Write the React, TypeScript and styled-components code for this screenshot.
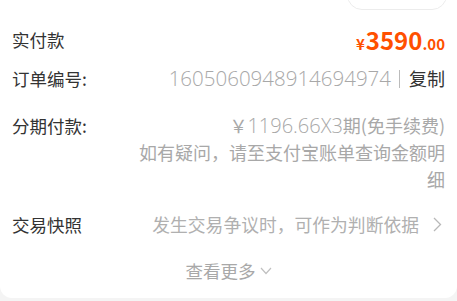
import React from "react";
import styled, { createGlobalStyle } from "styled-components";

const Global = createGlobalStyle`
  html, body { margin: 0; padding: 0; background: #f4f4f4; }
  body { font-family: "Noto Sans CJK SC", "Noto Sans", sans-serif; }
  * { box-sizing: border-box; }
`;

const Card = styled.div`
  width: 457px;
  height: 298px;
  background: #fff;
  border-radius: 0 0 12px 12px;
  padding: 0 12px 12px;
  display: flex;
  flex-direction: column;
  overflow: hidden;
`;

const TopBar = styled.div`
  height: 10px;
  display: flex;
  justify-content: flex-end;
`;

const Pill = styled.div`
  width: 100px;
  height: 30px;
  margin-top: -20px;
  margin-right: -2px;
  border: 1px solid #ececec;
  border-radius: 15px;
  flex-shrink: 0;
`;

const Row = styled.div<{ $gap: number; $top?: boolean }>`
  display: flex;
  justify-content: space-between;
  align-items: ${(p) => (p.$top ? "flex-start" : "center")};
  margin-top: ${(p) => p.$gap}px;
  line-height: 27px;
`;

const Label = styled.div`
  font-size: 17.5px;
  color: #333;
  white-space: nowrap;
`;

const Price = styled.div`
  color: #ff5000;
  font-weight: 700;
  display: flex;
  align-items: baseline;
  line-height: 27px;
  height: 27px;
`;

const Yen = styled.span`
  font-size: 15px;
  margin-right: 1px;
`;

const Big = styled.span`
  font-size: 24px;
`;

const Small = styled.span`
  font-size: 15px;
`;

const Value = styled.div`
  display: flex;
  align-items: center;
  font-size: 18px;
  color: #a8a8a8;
  white-space: nowrap;
`;

const Digits = styled.span<{ $size: number }>`
  font-family: "Open Sans", "Noto Sans", sans-serif;
  font-size: ${(p) => p.$size}px;
  font-weight: 300;
`;

const Sep = styled.span`
  width: 1px;
  height: 18px;
  background: #bbb;
  margin: 0 9px 0 8px;
`;

const Copy = styled.span`
  color: #333;
`;

const Multi = styled.div`
  font-size: 18px;
  color: #a8a8a8;
  text-align: right;
  max-width: 312px;
`;

const Snapshot = styled.div`
  display: flex;
  align-items: center;
  font-size: 17.8px;
  color: #b0b0b0;
  white-space: nowrap;
  gap: 14px;
  padding-right: 3px;
`;

const More = styled.div`
  margin-top: 19px;
  line-height: 27px;
  font-size: 17.5px;
  color: #a8a8a8;
  display: flex;
  justify-content: center;
  align-items: center;
  gap: 4px;
`;

export default function App() {
  return (
    <>
      <Global />
      <Card>
        <TopBar>
          <Pill />
        </TopBar>
        <Row $gap={16}>
          <Label>实付款</Label>
          <Price>
            <Yen>¥</Yen>
            <Big>3590</Big>
            <Small>.00</Small>
          </Price>
        </Row>
        <Row $gap={12}>
          <Label>订单编号:</Label>
          <Value>
            <Digits $size={20.5}>1605060948914694974</Digits>
            <Sep />
            <Copy>复制</Copy>
          </Value>
        </Row>
        <Row $gap={20} $top>
          <Label>分期付款:</Label>
          <Multi>
            ￥<Digits $size={20}>1196.66X3</Digits>期(免手续费)
            <br />
            如有疑问，请至支付宝账单查询金额明细
          </Multi>
        </Row>
        <Row $gap={18}>
          <Label>交易快照</Label>
          <Snapshot>
            发生交易争议时，可作为判断依据
            <svg width="9" height="15" viewBox="0 0 9 15">
              <polyline points="1,1 7.5,7.5 1,14" fill="none" stroke="#b8b8b8" strokeWidth="1.3" />
            </svg>
          </Snapshot>
        </Row>
        <More>
          查看更多
          <svg width="12" height="8" viewBox="0 0 12 8">
            <polyline points="1,1 6,6.5 11,1" fill="none" stroke="#c0c0c0" strokeWidth="1.2" />
          </svg>
        </More>
      </Card>
    </>
  );
}
